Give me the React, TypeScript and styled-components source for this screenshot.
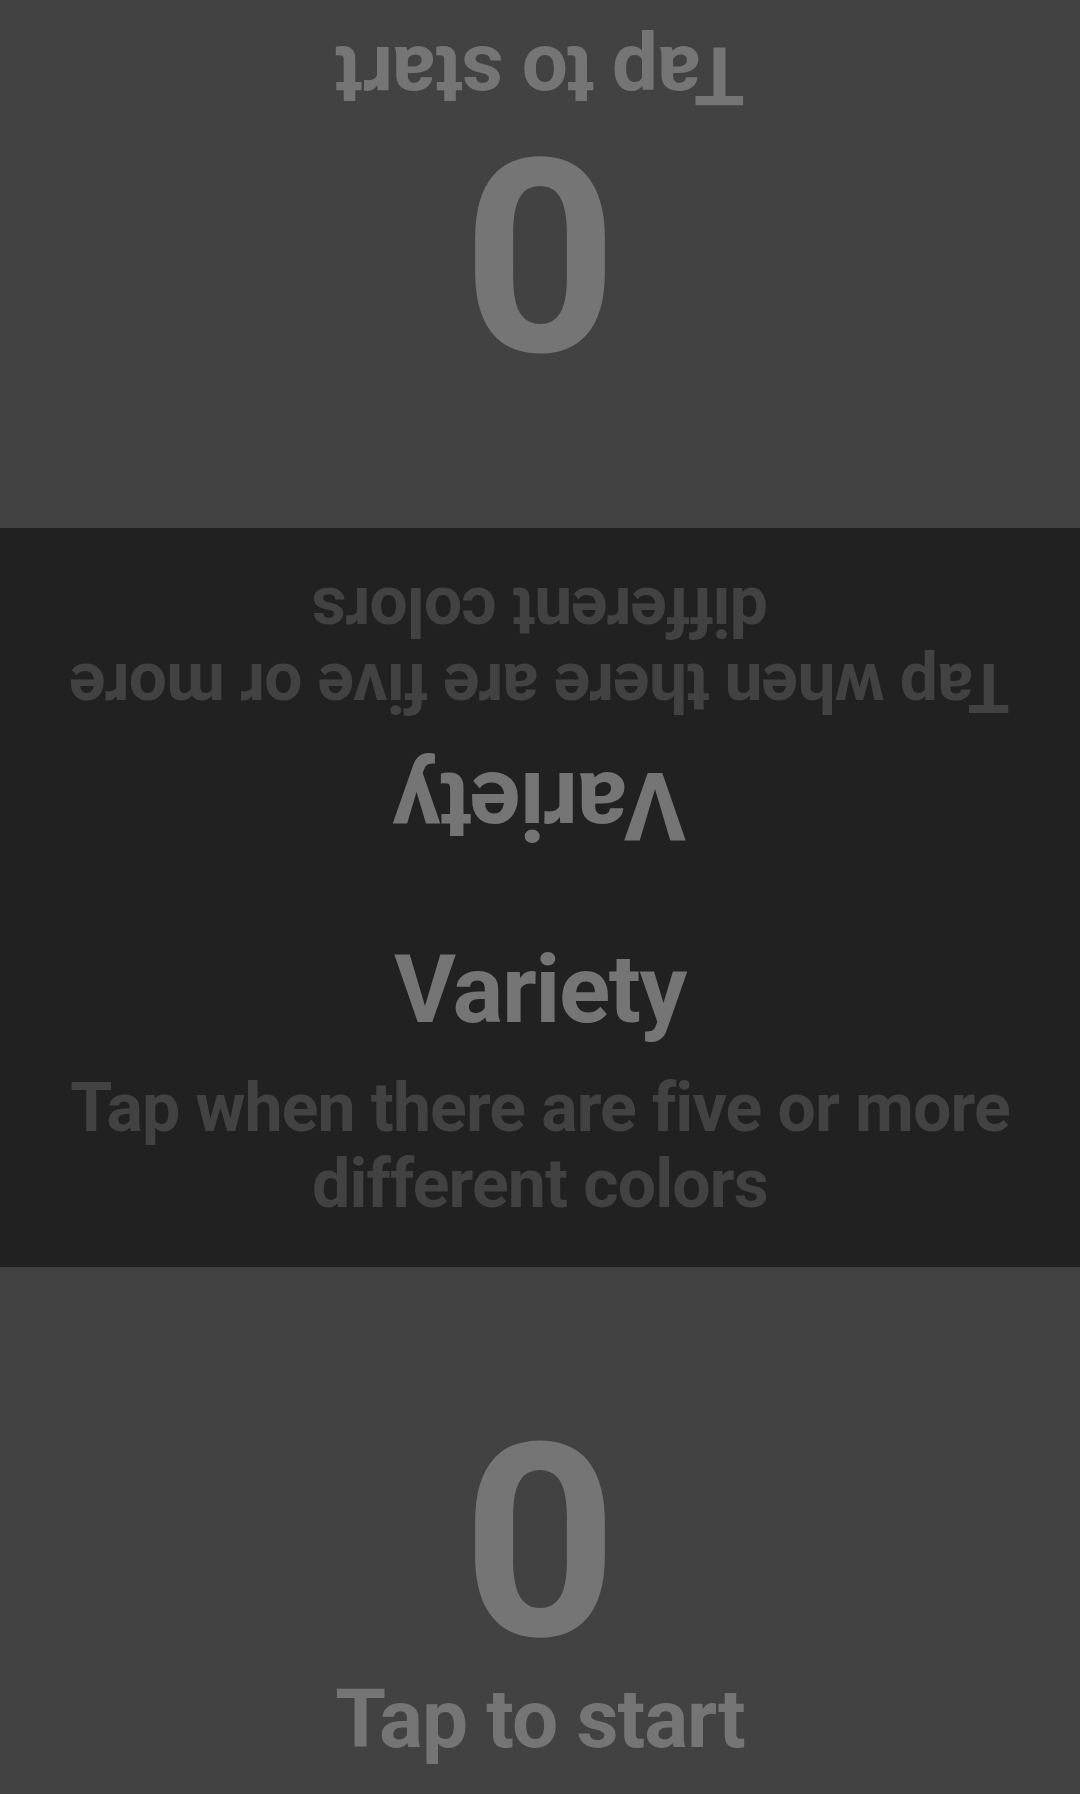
import React from "react";
import styled, { createGlobalStyle } from "styled-components";

const Global = createGlobalStyle`
  html, body { margin: 0; padding: 0; background: #212121; }
  body { font-family: Roboto, "Liberation Sans", sans-serif; }
  * { box-sizing: border-box; }
`;

const Screen = styled.div`
  width: 1080px;
  height: 1794px;
  display: flex;
  flex-direction: column;
  overflow: hidden;
`;

const PlayerPanel = styled.div<{ $flipped?: boolean; $h: number }>`
  height: ${(p) => p.$h}px;
  flex: none;
  background: #424242;
  display: flex;
  flex-direction: column;
  align-items: center;
  justify-content: flex-end;
  padding-bottom: 34px;
  transform: ${(p) => (p.$flipped ? "rotate(180deg)" : "none")};
`;

const Score = styled.div`
  font-family: Roboto, "Liberation Sans", sans-serif;
  font-weight: 700;
  font-size: 270px;
  line-height: 270px;
  color: #757575;
`;

const TapHint = styled.div`
  font-family: Roboto, "Liberation Sans", sans-serif;
  font-weight: 700;
  font-size: 82px;
  line-height: 82px;
  letter-spacing: -0.013em;
  color: #757575;
`;

const RuleBand = styled.div`
  height: 739px;
  flex: none;
  background: #212121;
  display: flex;
  flex-direction: column;
`;

const RuleHalf = styled.div<{ $flipped?: boolean }>`
  flex: 1;
  display: flex;
  flex-direction: column;
  align-items: center;
  justify-content: center;
  padding: 0 40px;
  transform: ${(p) => (p.$flipped ? "rotate(180deg)" : "none")};
`;

const RuleTitle = styled.div`
  font-family: Roboto, "Liberation Sans", sans-serif;
  font-weight: 700;
  font-size: 95px;
  line-height: 95px;
  letter-spacing: -0.015em;
  color: #757575;
  margin-bottom: 33px;
`;

const RuleText = styled.div`
  font-family: Roboto, "Liberation Sans", sans-serif;
  font-weight: 700;
  font-size: 68px;
  line-height: 76px;
  letter-spacing: -0.013em;
  color: #424242;
  text-align: center;
`;

const Player = ({ flipped, h }: { flipped?: boolean; h: number }) => (
  <PlayerPanel $flipped={flipped} $h={h}>
    <Score>0</Score>
    <TapHint>Tap to start</TapHint>
  </PlayerPanel>
);

const Rule = ({ flipped }: { flipped?: boolean }) => (
  <RuleHalf $flipped={flipped}>
    <RuleTitle>Variety</RuleTitle>
    <RuleText>Tap when there are five or more different colors</RuleText>
  </RuleHalf>
);

export default function App() {
  return (
    <>
      <Global />
      <Screen>
        <Player flipped h={528} />
        <RuleBand>
          <Rule flipped />
          <Rule />
        </RuleBand>
        <Player h={527} />
      </Screen>
    </>
  );
}
